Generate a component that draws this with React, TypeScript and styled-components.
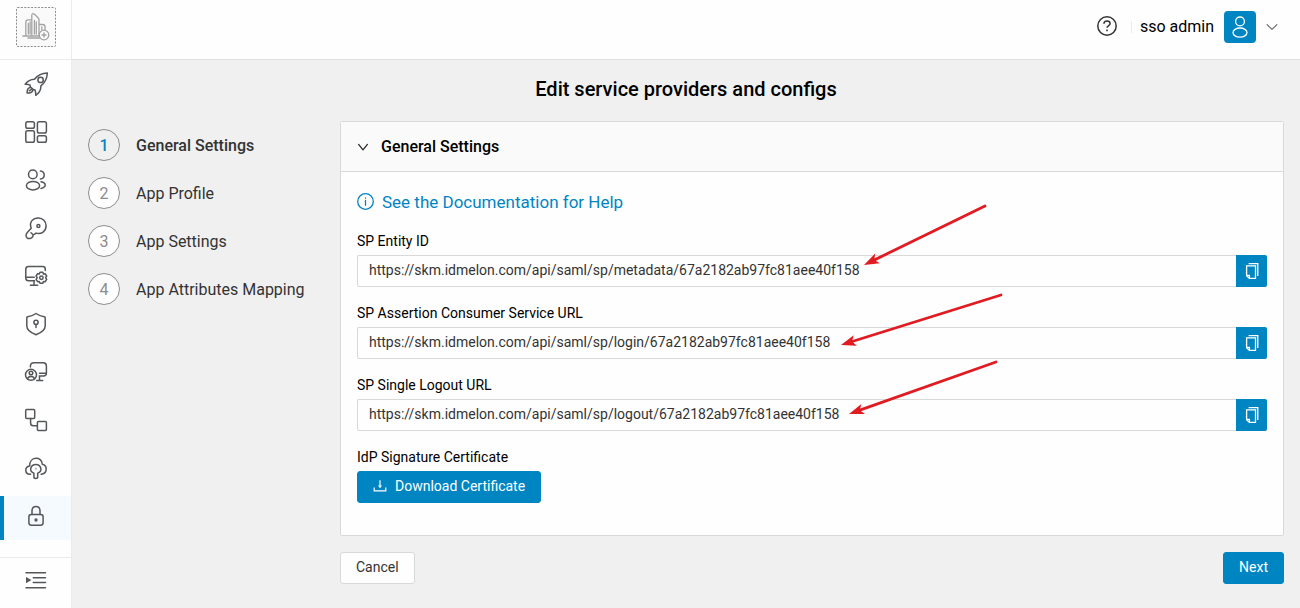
import React from "react";
import styled, { createGlobalStyle, css } from "styled-components";

const blue = "#0085c3";
const line = "#d9d9d9";
const surface = "#fefefe";

const GlobalStyle = createGlobalStyle`
  *, *::before, *::after { box-sizing: border-box; }
  body {
    margin: 0;
    background: #f0f0f0;
    color: #000;
    font: 400 14px/22px Roboto, "Liberation Sans", sans-serif;
  }
  button, input { font: inherit; }
`;

const Shell = styled.div`
  display: flex;
  min-height: 100vh;
`;

const Sidebar = styled.aside`
  display: flex;
  flex-direction: column;
  flex: 0 0 72px;
  background: ${surface};
  border-right: 1px solid #ebebeb;
`;

const LogoArea = styled.div`
  display: flex;
  justify-content: center;
  height: 60px;
  padding-top: 7px;
  border-bottom: 1px solid #ebebeb;
`;

const LogoButton = styled.button`
  width: 40px;
  height: 40px;
  padding: 0;
  border: 0;
  background: none;
`;

const Nav = styled.nav`
  display: flex;
  flex: 1;
  flex-direction: column;
  gap: 4px;
  padding: 4px 0;
`;

const NavItem = styled.a<{ $active?: boolean }>`
  display: flex;
  justify-content: center;
  height: 44px;
  padding-top: 8px;
  color: #55575a;
  ${({ $active }) =>
    $active &&
    css`
      background: #f5faff;
      box-shadow: inset 4px 0 ${blue};
    `}
`;

const Collapse = styled.button`
  display: flex;
  align-items: flex-start;
  justify-content: center;
  height: 51px;
  padding: 10px 0 0;
  border: 0;
  border-top: 1px solid #ebebeb;
  background: none;
  color: #55575a;
`;

const Page = styled.div`
  display: flex;
  flex: 1;
  flex-direction: column;
  min-width: 0;
`;

const TopBar = styled.header`
  display: flex;
  align-items: center;
  justify-content: flex-end;
  height: 60px;
  padding: 0 22px 6px 16px;
  background: ${surface};
  border-bottom: 1px solid #e0e0e0;
`;

const HelpButton = styled.button`
  display: flex;
  padding: 0 0 2px;
  border: 0;
  background: none;
  color: #333;
`;

const Separator = styled.span`
  width: 1px;
  height: 12px;
  margin: 0 8px 0 12px;
  background: #ebebeb;
`;

const Account = styled.button`
  display: flex;
  align-items: center;
  gap: 10px;
  padding: 0;
  border: 0;
  background: none;
  color: #000;
  font-size: 16px;
  line-height: 23px;
`;

const Avatar = styled.span`
  display: flex;
  align-items: center;
  justify-content: center;
  width: 32px;
  height: 32px;
  border-radius: 4px;
  background: ${blue};
  color: #fff;
`;

const Main = styled.main`
  padding: 13px 16px 16px;
`;

const Title = styled.h1`
  margin: 0 0 16px;
  font-size: 20px;
  font-weight: 500;
  line-height: 32px;
  text-align: center;
`;

const Columns = styled.div`
  display: grid;
  grid-template-columns: 236px minmax(0, 1fr);
  gap: 16px;
`;

const Steps = styled.ol`
  display: flex;
  flex-direction: column;
  gap: 16px;
  margin: 0;
  padding: 8px 0 0;
  list-style: none;
`;

const Step = styled.li<{ $active?: boolean }>`
  display: flex;
  gap: 16px;
  color: #333;
  font-size: 16px;
  font-weight: ${({ $active }) => ($active ? 500 : 400)};
  line-height: 33px;
  height: 32px;
`;

const StepNumber = styled.span<{ $active?: boolean }>`
  width: 32px;
  height: 32px;
  border: 1px solid #8c8c8c;
  border-radius: 50%;
  background: ${({ $active }) => ($active ? "transparent" : surface)};
  color: ${({ $active }) => ($active ? blue : "#8c8c8c")};
  font-weight: ${({ $active }) => ($active ? 500 : 400)};
  line-height: 31px;
  text-align: center;
`;

const Card = styled.section`
  border: 1px solid ${line};
  border-radius: 2px;
  background: ${surface};
`;

const CardHeader = styled.button`
  display: flex;
  align-items: center;
  gap: 12px;
  width: 100%;
  height: 50px;
  padding: 0 16px;
  border: 0;
  border-bottom: 1px solid ${line};
  background: #fafafa;
  color: #000;
  font-size: 16px;
  font-weight: 500;
`;

const CardBody = styled.div`
  position: relative;
  padding: 16px 16px 32px;
`;

const HelpLink = styled.a`
  display: flex;
  align-items: center;
  gap: 8px;
  width: fit-content;
  height: 27px;
  color: ${blue};
  font-size: 17px;
  line-height: 26px;
  text-decoration: none;
`;

const Fields = styled.div`
  display: flex;
  flex-direction: column;
  gap: 16px;
  margin-top: 16px;
`;

const Field = styled.div`
  display: flex;
  flex-direction: column;
`;

const Label = styled.label`
  height: 24px;
  line-height: 20px;
`;

const Caption = styled.span`
  height: 24px;
  line-height: 20px;
`;

const InputRow = styled.div`
  display: flex;
`;

const TextInput = styled.input`
  flex: 1;
  min-width: 0;
  height: 32px;
  padding: 0 11px 2px;
  border: 1px solid ${line};
  border-right: 0;
  border-radius: 2px 0 0 2px;
  background: ${surface};
  color: #333;
`;

const CopyButton = styled.button`
  display: flex;
  align-items: center;
  justify-content: center;
  width: 31px;
  height: 32px;
  padding: 0;
  border: 0;
  border-radius: 0 2px 2px 0;
  background: ${blue};
  color: #fff;
`;

const Button = styled.button<{ $primary?: boolean }>`
  display: inline-flex;
  align-items: center;
  align-self: flex-start;
  gap: 8px;
  height: 32px;
  padding: 0 15px 2px;
  border: 1px solid ${({ $primary }) => ($primary ? blue : line)};
  border-radius: 3px;
  background: ${({ $primary }) => ($primary ? blue : surface)};
  color: ${({ $primary }) => ($primary ? "#fff" : "#333")};
`;

const Footer = styled.footer`
  display: flex;
  justify-content: space-between;
  margin-top: 16px;
`;

const Annotations = styled.svg`
  position: absolute;
  top: 0;
  left: 0;
  width: 100%;
  height: 100%;
  pointer-events: none;
`;

function Icon({ children, size = 24, box = 24, stroke = 1.5 }: {
  children: React.ReactNode;
  size?: number;
  box?: number;
  stroke?: number;
}) {
  return (
    <svg
      width={size}
      height={size}
      viewBox={`0 0 ${box} ${box}`}
      fill="none"
      stroke="currentColor"
      strokeWidth={stroke}
      strokeLinecap="round"
      strokeLinejoin="round"
      aria-hidden="true"
    >
      {children}
    </svg>
  );
}

const ChevronDown = () => (
  <Icon size={12} box={12} stroke={1.2}>
    <path d="M1.6 3.4 6 8.8l4.4-5.4" stroke="#222" />
  </Icon>
);

const navItems: { name: string; icon: React.ReactNode }[] = [
  {
    name: "Get started",
    icon: (
      <>
        <path d="M23.3.9C17.9.9 13.7 3.1 10.4 7.2 6.5 7.3 3.6 8.9 1.2 12.3c1.8-.2 3.5.1 5 .8-.3 1 .1 1.7.9 2.5l1.3 1.3c.8.8 1.5 1.1 2.5.8.8 1.8 1 3.6.8 5.6 3.8-2.4 5.3-5.6 5.2-9.4 4-3.4 6.3-7.6 6.4-13Z" />
        <circle cx="16.6" cy="7.9" r="2.7" />
        <path d="M6.1 15.5c-2.4.5-3.1 2.1-3 5.6 3.5.1 5.2-.6 5.8-2.9M7.7 17.1l-2.3 1.7" />
      </>
    ),
  },
  {
    name: "Dashboard",
    icon: (
      <>
        <rect x="1.8" y="1.8" width="8.6" height="6.4" rx="1.8" />
        <rect x="13.4" y="1.8" width="9" height="11.3" rx="1.8" />
        <rect x="1.8" y="10.8" width="8.6" height="11.5" rx="1.8" />
        <rect x="13.4" y="15.8" width="9" height="6.5" rx="1.8" />
      </>
    ),
  },
  {
    name: "Users",
    icon: (
      <>
        <circle cx="8.8" cy="6.4" r="4.3" />
        <ellipse cx="9" cy="17.7" rx="6.6" ry="4.2" />
        <path d="M16.4 2.9c5.1.6 5.1 7.5 0 8.1M17 13.8c5.6 1 5.6 5.6 0 6.6" />
      </>
    ),
  },
  {
    name: "Keys",
    icon: (
      <>
        <path d="M7.2 12.3C4.7 5.6 9.3 2 14.4 2c4.5 0 7.7 3.6 7.7 7.8 0 5.3-4.7 9-10 7.3l-1.8 1.3-1.1.3-.5 2c-1 2-4.1 2.3-5.6 1.1-1.5-1.3-1.4-3.8.2-5.2l3.9-4.3ZM7 16.7l2.2 2" />
        <circle cx="14.4" cy="9.9" r="1.5" />
      </>
    ),
  },
  {
    name: "Workstations",
    icon: (
      <>
        <path d="M21.3 6.5V5.2c0-1.8-.8-2.7-2.6-2.7H4.6c-1.9 0-2.8.9-2.8 2.7V14c0 1.9.9 2.8 2.8 2.8h6M1.8 13.2h8.4M10 16.8v4.5M6.4 21.3h7.3" />
        <path d="M16 8.2h2.8l.6 1.7 1.7-.2 1.6 2.3-1.1 1.7 1.1 1.7-1.5 2.3-1.8-.2-.6 1.7H16l-.7-1.7-1.7.2-1.5-2.3 1.1-1.7-1.1-1.7 1.5-2.3 1.7.2.7-1.7Z" />
        <circle cx="17.4" cy="13.7" r="1.7" />
      </>
    ),
  },
  {
    name: "Security",
    icon: (
      <>
        <path d="M12 1.5c2.6 1.8 5.5 2.9 8.2 3.3.7.1 1 .5 1 1.2v8c0 4.1-4.2 6.8-9.2 8.8-5-2-9.2-4.7-9.2-8.8V6c0-.7.3-1.1 1-1.2 2.7-.4 5.6-1.5 8.2-3.3Z" />
        <circle cx="12" cy="10.3" r="2.1" />
        <path d="M12 12.4v3.1" />
      </>
    ),
  },
  {
    name: "Remote access",
    icon: (
      <>
        <path d="M6.4 7V6.3c0-2.3 1-3.5 3.6-3.5h9.3c2.1 0 3.1 1.2 3.1 3.3v7c0 1.9-1 3-2.9 3h-4.3M15.5 13.2h6.7M15.5 16.4v4M12.7 20.5h6" />
        <circle cx="7" cy="14.8" r="5.5" />
        <circle cx="7" cy="13" r="1.8" />
        <path d="M3.6 18.8c.4-3 6.4-3 6.8 0" />
      </>
    ),
  },
  {
    name: "Workflows",
    icon: (
      <>
        <rect x="1.7" y="1.6" width="9" height="9" rx="1" />
        <rect x="13.4" y="13.4" width="9" height="9" rx="1" />
        <path d="M6.6 10.6v4.3c0 1.9 1 2.8 2.9 2.8h3.7" />
      </>
    ),
  },
  {
    name: "Cloud keys",
    icon: (
      <>
        <path d="M6.6 18.3c-6 .4-6.4-7.5-.9-8.2C5.2.1 18 .1 18.3 8.2c5.3.9 5.4 9.5-1.2 10.1" />
        <path d="M9.9 17.3c-5.6-2.2-3.1-8.8 1.9-8.8s7.5 6.6 1.9 8.8v3.6c0 2-3.8 2-3.8 0Z" />
        <circle cx="11.8" cy="12.6" r=".2" />
      </>
    ),
  },
  {
    name: "Single sign-on",
    icon: (
      <>
        <path d="M8 10.6V7.1c0-6.2 8-6.2 8 0v3.5" />
        <rect x="4.9" y="10.6" width="14.2" height="10.6" rx="2.4" />
        <circle cx="12" cy="16" r=".9" fill="currentColor" />
      </>
    ),
  },
];

const steps = ["General Settings", "App Profile", "App Settings", "App Attributes Mapping"];

const urls = [
  {
    id: "entity-id",
    label: "SP Entity ID",
    value: "https://skm.idmelon.com/api/saml/sp/metadata/67a2182ab97fc81aee40f158",
  },
  {
    id: "acs-url",
    label: "SP Assertion Consumer Service URL",
    value: "https://skm.idmelon.com/api/saml/sp/login/67a2182ab97fc81aee40f158",
  },
  {
    id: "logout-url",
    label: "SP Single Logout URL",
    value: "https://skm.idmelon.com/api/saml/sp/logout/67a2182ab97fc81aee40f158",
  },
];

const arrows = [
  { from: [644, 34], to: [523, 93] },
  { from: [660, 123], to: [500, 173] },
  { from: [655, 190], to: [508, 242] },
];

function Arrow({ from, to }: { from: number[]; to: number[] }) {
  const dx = from[0] - to[0];
  const dy = from[1] - to[1];
  const length = Math.hypot(dx, dy);
  const angle = (Math.atan2(dy, dx) * 180) / Math.PI;
  return (
    <g transform={`translate(${to[0]} ${to[1]}) rotate(${angle})`}>
      <path d={`M10 0H${length}`} stroke="#e11b22" strokeWidth="2.8" strokeLinecap="round" />
      <path d="M0 0 15-5.4 11.5 0 15 5.4Z" fill="#e11b22" />
    </g>
  );
}

export default function App() {
  return (
    <Shell>
      <GlobalStyle />
      <Sidebar>
        <LogoArea>
          <LogoButton type="button" aria-label="Upload logo">
            <svg width="40" height="40" viewBox="0 0 40 40" fill="none" stroke="#a3a3a3" strokeLinecap="round" strokeLinejoin="round">
              <rect x=".5" y=".5" width="39" height="39" rx="1" fill="#fafafa" stroke="#8c8c8c" strokeDasharray="2 1.4" strokeLinecap="butt" />
              <path d="M9.8 28.5V15.3c0-1.7.8-2.4 2.4-2.4h3.6M12.3 27V16.3M14.1 27V15M15.8 28.5V8.3c0-1.5 1.3-2.2 2.4-1.2l3.6 3.4c.8.7 1.2 1.5 1.2 2.5v15.5M18.4 27V13.5M20.3 27V15M23 17.5h3.6c1.6 0 2.4.8 2.4 2.2v3M25.8 20v2.5M6.8 29h16.4M12 31h11.5" strokeWidth="1.3" />
              <circle cx="28" cy="28" r="4.8" fill="#fafafa" strokeWidth="1.3" />
              <path d="M26 28h4M28 26v4" strokeWidth="1.4" />
            </svg>
          </LogoButton>
        </LogoArea>
        <Nav aria-label="Main">
          {navItems.map((item, index) => (
            <NavItem key={item.name} href="#" aria-label={item.name} $active={index === 9}>
              <Icon>{item.icon}</Icon>
            </NavItem>
          ))}
        </Nav>
        <Collapse type="button" aria-label="Expand menu">
          <Icon>
            <path d="M2 4.8h19.5M9.3 9.8h12.2M9.3 14.6h12.2M2 19.8h19.5" />
            <path d="M2 8.9v6.4l5.4-3.2Z" fill="currentColor" stroke="none" />
          </Icon>
        </Collapse>
      </Sidebar>

      <Page>
        <TopBar>
          <HelpButton type="button" aria-label="Help">
            <Icon>
              <circle cx="12" cy="12" r="9.2" />
              <path d="M8.9 9.8c.1-1.8 1.4-2.8 3.1-2.8s3.1 1 3.1 2.6c0 2.3-3.1 2.1-3.1 4.1" strokeLinecap="butt" />
              <path d="M12 15.6v1.6" strokeLinecap="butt" />
            </Icon>
          </HelpButton>
          <Separator />
          <Account type="button">
            sso admin
            <Avatar>
              <Icon stroke={1.3}>
                <circle cx="12" cy="6.4" r="4.4" />
                <ellipse cx="12" cy="17.6" rx="7" ry="4.6" />
              </Icon>
            </Avatar>
            <Icon size={12} box={12} stroke={1.3}>
              <path d="M1.2 3.8 6 8.4l4.8-4.6" stroke="#777" />
            </Icon>
          </Account>
        </TopBar>

        <Main>
          <Title>Edit service providers and configs</Title>
          <Columns>
            <Steps>
              {steps.map((step, index) => (
                <Step key={step} $active={index === 0}>
                  <StepNumber $active={index === 0}>{index + 1}</StepNumber>
                  {step}
                </Step>
              ))}
            </Steps>

            <div>
              <Card>
                <CardHeader type="button" aria-expanded="true">
                  <ChevronDown />
                  General Settings
                </CardHeader>
                <CardBody>
                  <HelpLink href="#">
                    <Icon size={17} box={17} stroke={1.3}>
                      <circle cx="8.5" cy="8.5" r="7.8" />
                      <path d="M8.5 7.5v4.8M8.5 4.9v.3" />
                    </Icon>
                    See the Documentation for Help
                  </HelpLink>
                  <Fields>
                    {urls.map((url) => (
                      <Field key={url.id}>
                        <Label htmlFor={url.id}>{url.label}</Label>
                        <InputRow>
                          <TextInput id={url.id} value={url.value} readOnly />
                          <CopyButton type="button" aria-label={`Copy ${url.label}`}>
                            <Icon size={16} box={16} stroke={1.3}>
                              <path d="M2.6 2.8h8.9v12.6H5.4l-2.8-2.7ZM2.6 12.3h2.8v3.1M4.6.7h9.2v12.3" strokeLinecap="butt" strokeLinejoin="miter" />
                            </Icon>
                          </CopyButton>
                        </InputRow>
                      </Field>
                    ))}
                    <Field>
                      <Caption>IdP Signature Certificate</Caption>
                      <Button type="button" $primary>
                        <Icon size={14} box={14} stroke={1.2}>
                          <path d="M7 1.2v6M1.2 8.5v3.3h11.6V8.5" strokeLinecap="butt" strokeLinejoin="miter" />
                          <path d="M5 6.6h4L7 9.2Z" fill="currentColor" stroke="none" />
                        </Icon>
                        Download Certificate
                      </Button>
                    </Field>
                  </Fields>
                  <Annotations aria-hidden="true">
                    {arrows.map((arrow) => (
                      <Arrow key={arrow.to[1]} {...arrow} />
                    ))}
                  </Annotations>
                </CardBody>
              </Card>
              <Footer>
                <Button type="button">Cancel</Button>
                <Button type="button" $primary>Next</Button>
              </Footer>
            </div>
          </Columns>
        </Main>
      </Page>
    </Shell>
  );
}
